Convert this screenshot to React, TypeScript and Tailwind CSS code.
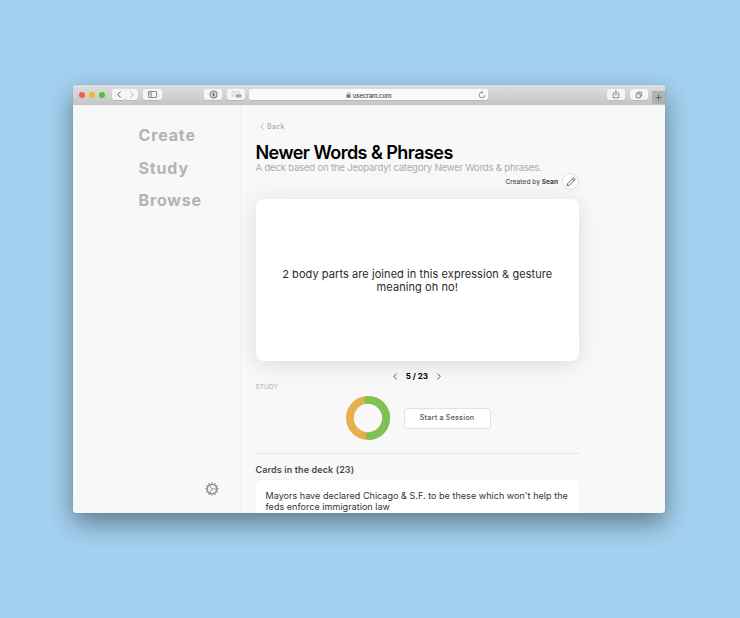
import type { ReactNode } from "react";

function ToolButton({ className, children }: { className: string; children: ReactNode }) {
  return (
    <div className={`flex h-[11px] shrink-0 items-center justify-center rounded-[2px] bg-[#f5f5f5] shadow-[0_0.5px_0.5px_rgba(0,0,0,0.18)] ${className}`}>
      {children}
    </div>
  );
}

function Chevron({ dir, className }: { dir: "left" | "right"; className: string }) {
  return (
    <svg viewBox="0 0 4 7" fill="none" stroke="currentColor" strokeLinecap="round" strokeLinejoin="round" className={className}>
      <path d={dir === "left" ? "M3.4 0.8 0.7 3.5 3.4 6.2" : "M0.6 0.8 3.3 3.5 0.6 6.2"} strokeWidth="0.85" />
    </svg>
  );
}

function TitleBar() {
  return (
    <div className="flex h-5 shrink-0 items-start border-b border-[#c4c4c4] bg-linear-to-b from-[#dfdfdf] to-[#c7c7c7] pt-[4px]">
      <div className="mt-[2.5px] ml-[6.3px] flex gap-[3.8px]">
        <span className="size-[6.2px] rounded-full bg-[#ee5f52]" />
        <span className="size-[6.2px] rounded-full bg-[#f2b92c]" />
        <span className="size-[6.2px] rounded-full bg-[#51c234]" />
      </div>
      <ToolButton className="ml-[6.8px] w-[12.5px] text-[#444]">
        <Chevron dir="left" className="h-[7px] w-[4px]" />
      </ToolButton>
      <ToolButton className="ml-[0.5px] w-[12.5px] text-[#aaa]">
        <Chevron dir="right" className="h-[7px] w-[4px]" />
      </ToolButton>
      <ToolButton className="ml-[5px] w-[19px]">
        <svg viewBox="0 0 9 7" fill="none" stroke="#707070" strokeWidth="0.8" className="h-[7px] w-[9px]">
          <rect x="0.5" y="0.5" width="8" height="6" rx="0.5" />
          <path d="M3.2 0.5v6M1.2 2h1M1.2 3.4h1" />
        </svg>
      </ToolButton>
      <ToolButton className="ml-[42px] w-[18.5px]">
        <svg viewBox="0 0 9 9" fill="none" className="size-[9px]">
          <circle cx="4.5" cy="4.5" r="3.5" fill="#d5d5d5" stroke="#808080" strokeWidth="1.1" />
          <path d="M4.5 2.8v3.4" stroke="#606060" strokeWidth="1.4" />
        </svg>
      </ToolButton>
      <ToolButton className="ml-[4.5px] w-[18.5px]">
        <svg viewBox="0 0 11 7" fill="none" className="h-[7px] w-[11px]">
          <path d="M4 5H1V0.7h7v2" stroke="#c4c4c4" strokeWidth="0.7" />
          <path d="m2.3 1.8 2 1.6" stroke="#aaa" strokeWidth="0.7" />
          <path d="M4.8 3.2h5.5v3.3H4.8z" fill="#a5a5a5" />
        </svg>
      </ToolButton>
      <div className="ml-[4px] flex h-[11px] w-[239px] shrink-0 items-center rounded-[2px] bg-[#fafafa] shadow-[0_0.5px_0.5px_rgba(0,0,0,0.18)]">
        <div className="flex flex-1 items-center gap-[2px] pl-[96.5px]">
          <svg viewBox="0 0 5 6" className="h-[6px] w-[5px]">
            <rect x="0.4" y="2.6" width="4.2" height="3.1" rx="0.3" fill="#777" />
            <path d="M1.2 3V1.8a1.3 1.3 0 0 1 2.6 0V3" fill="none" stroke="#888" strokeWidth="0.7" />
          </svg>
          <span className="pt-px text-[6.2px] leading-[11px] font-medium tracking-[-0.15px] whitespace-nowrap text-[#444]">usecram.com</span>
        </div>
        <svg viewBox="0 0 8 8" fill="none" stroke="#777" strokeWidth="0.8" className="mr-[2px] size-[8px]">
          <path d="M4.4 1.3A2.8 2.8 0 1 0 6.8 4M3.6 0.2l1.5 1.1-1.4 1.3" />
        </svg>
      </div>
      <ToolButton className="ml-[118.5px] w-[18.5px]">
        <svg viewBox="0 0 8 9" fill="none" stroke="#707070" strokeWidth="0.8" className="h-[9px] w-[8px]">
          <path d="M2.8 3.4H1.2v4.4h5.6V3.4H5.2M4 5.7V0.9M2.6 2.2 4 0.8l1.4 1.4" />
        </svg>
      </ToolButton>
      <ToolButton className="ml-[4.5px] w-[18.5px]">
        <svg viewBox="0 0 8 8" fill="none" stroke="#707070" strokeWidth="0.8" className="size-[8px]">
          <path d="M1.2 2.8h4v4h-4zM2.7 2.5V1.2h4v4H5.4" />
        </svg>
      </ToolButton>
      <div className="mt-[2px] ml-auto flex h-[13px] w-[13px] items-center justify-center bg-[#b1b1b1]">
        <svg viewBox="0 0 7 7" stroke="#555" strokeWidth="0.8" className="size-[7px]">
          <path d="M3.5 0.5v6M0.5 3.5h6" />
        </svg>
      </div>
    </div>
  );
}

function SettingsGear() {
  const teeth = Array.from({ length: 12 }, (_, i) => i * 30);
  return (
    <svg viewBox="-7 -7 14 14" fill="none" stroke="#8f8f8f" className="size-[14px]">
      <circle r="4.8" strokeWidth="1.6" />
      {teeth.map((a) => (
        <path key={a} d="M0 -5.4V-6.6" strokeWidth="1.3" transform={`rotate(${a})`} />
      ))}
      <path d="M0 0H4.8M0 0 -2.5 -4.2M0 0 -2.5 4.2" strokeWidth="0.9" />
    </svg>
  );
}

function Sidebar() {
  return (
    <aside className="flex w-[168px] shrink-0 flex-col border-r border-[#f1f1f1] pt-[18px] pb-[17.5px]">
      <nav className="flex flex-col gap-[8.5px] pl-[65.5px] text-[16px] leading-6 font-bold tracking-[0.85px] text-[#b3b3b3]">
        <span>Create</span>
        <span>Study</span>
        <span>Browse</span>
      </nav>
      <div className="mt-auto ml-[131.5px]">
        <SettingsGear />
      </div>
    </aside>
  );
}

function ProgressRing() {
  return (
    <svg viewBox="0 0 44 44" fill="none" strokeWidth="7.8" className="size-[44px]">
      <circle cx="22" cy="22" r="18.1" stroke="#e6ae4e" />
      <path d="M21.9 3.9A18.1 18.1 0 0 1 23.4 40.05" stroke="#7dc353" strokeLinecap="round" />
    </svg>
  );
}

function DeckPage() {
  return (
    <main className="flex w-[338px] shrink-0 flex-col pl-[14.5px] text-[#2b2b2b]">
      <div className="mt-[17px] flex h-[10px] items-center gap-[3.5px] pl-[4px] text-[#aaa]">
        <Chevron dir="left" className="mb-px h-[7px] w-[4px]" />
        <span className="text-[7px] leading-[10px] font-medium tracking-[0.3px]">Back</span>
      </div>
      <h1 className="mt-[10px] text-[18px] leading-[22px] font-semibold tracking-[-0.55px] whitespace-nowrap text-black">
        Newer Words &amp; Phrases
      </h1>
      <p className="-mt-[2px] text-[9.6px] leading-[12px] tracking-[-0.22px] whitespace-nowrap text-[#ababab]">
        A deck based on the Jeopardy! category Newer Words &amp; phrases.
      </p>
      <div className="-mt-[1px] flex h-[17px] shrink-0 items-center justify-end gap-[4px]">
        <span className="text-[6.6px] leading-[10px] font-medium whitespace-nowrap text-[#555]">
          Created by <b className="font-bold text-[#444]">Sean</b>
        </span>
        <div className="flex size-[17px] items-center justify-center rounded-full border border-[#e2e2e2] bg-white">
          <svg viewBox="0 0 10 10" fill="none" stroke="#444" strokeWidth="0.8" strokeLinejoin="round" className="size-[10px]">
            <path d="M1.2 8.8 1.8 6.5 7 1.3a1 1 0 0 1 1.5 0l.2.2a1 1 0 0 1 0 1.5L3.5 8.2ZM6.2 2.1l1.7 1.7" />
          </svg>
        </div>
      </div>
      <section className="mt-[9px] flex h-[162px] shrink-0 items-center justify-center rounded-[8px] bg-white pt-[2px] text-center text-[11px] leading-[13.5px] tracking-[0.07px] whitespace-nowrap text-[#2a2a2a] shadow-[0_3px_22px_rgba(0,0,0,0.12)]">
        <p>
          2 body parts are joined in this expression &amp; gesture
          <br />
          meaning oh no!
        </p>
      </section>
      <div className="mt-[10px] flex h-[11px] shrink-0 items-center justify-center gap-[9px] text-[#444]">
        <Chevron dir="left" className="h-[7px] w-[4px]" />
        <span className="text-[8px] leading-[11px] font-bold text-black">5 / 23</span>
        <Chevron dir="right" className="mr-px h-[7px] w-[4px]" />
      </div>
      <span className="text-[6.6px] leading-[10px] text-[#b0b0b0]">STUDY</span>
      <div className="mt-[4px] flex h-[44px] shrink-0 items-center gap-[13.5px] pl-[90.5px]">
        <ProgressRing />
        <button className="h-[21px] w-[87px] rounded-[3px] border border-[#e2e2e2] bg-white text-[7.2px] font-medium tracking-[0.2px] text-[#555]">
          Start a Session
        </button>
      </div>
      <hr className="mt-[13px] border-t border-[#e6e6e6]" />
      <h2 className="mt-[9px] text-[9px] leading-[13px] font-semibold tracking-[0.12px] whitespace-nowrap text-[#4a4a4a]">Cards in the deck (23)</h2>
      <div className="mt-[4px] h-[60px] shrink-0 rounded-[5px] bg-white px-[10px] pt-[11px] text-[9px] leading-[10.5px] tracking-[0.04px] whitespace-nowrap text-[#333] shadow-[0_0_3px_rgba(0,0,0,0.04)]">
        Mayors have declared Chicago &amp; S.F. to be these which won't help the
        <br />
        feds enforce immigration law
      </div>
    </main>
  );
}

export default function App() {
  return (
    <div className="h-[618px] w-[740px] overflow-hidden bg-[#a4d1f0] pt-[85px] pl-[73px] font-['Inter',sans-serif]">
      <div className="flex h-[428px] w-[592px] flex-col overflow-hidden rounded-[3px] bg-[#f8f8f8] shadow-[0_10px_26px_rgba(0,0,0,0.42),0_0_1px_rgba(0,0,0,0.3)]">
        <TitleBar />
        <div className="flex min-h-0 flex-1 overflow-hidden">
          <Sidebar />
          <DeckPage />
        </div>
      </div>
    </div>
  );
}
